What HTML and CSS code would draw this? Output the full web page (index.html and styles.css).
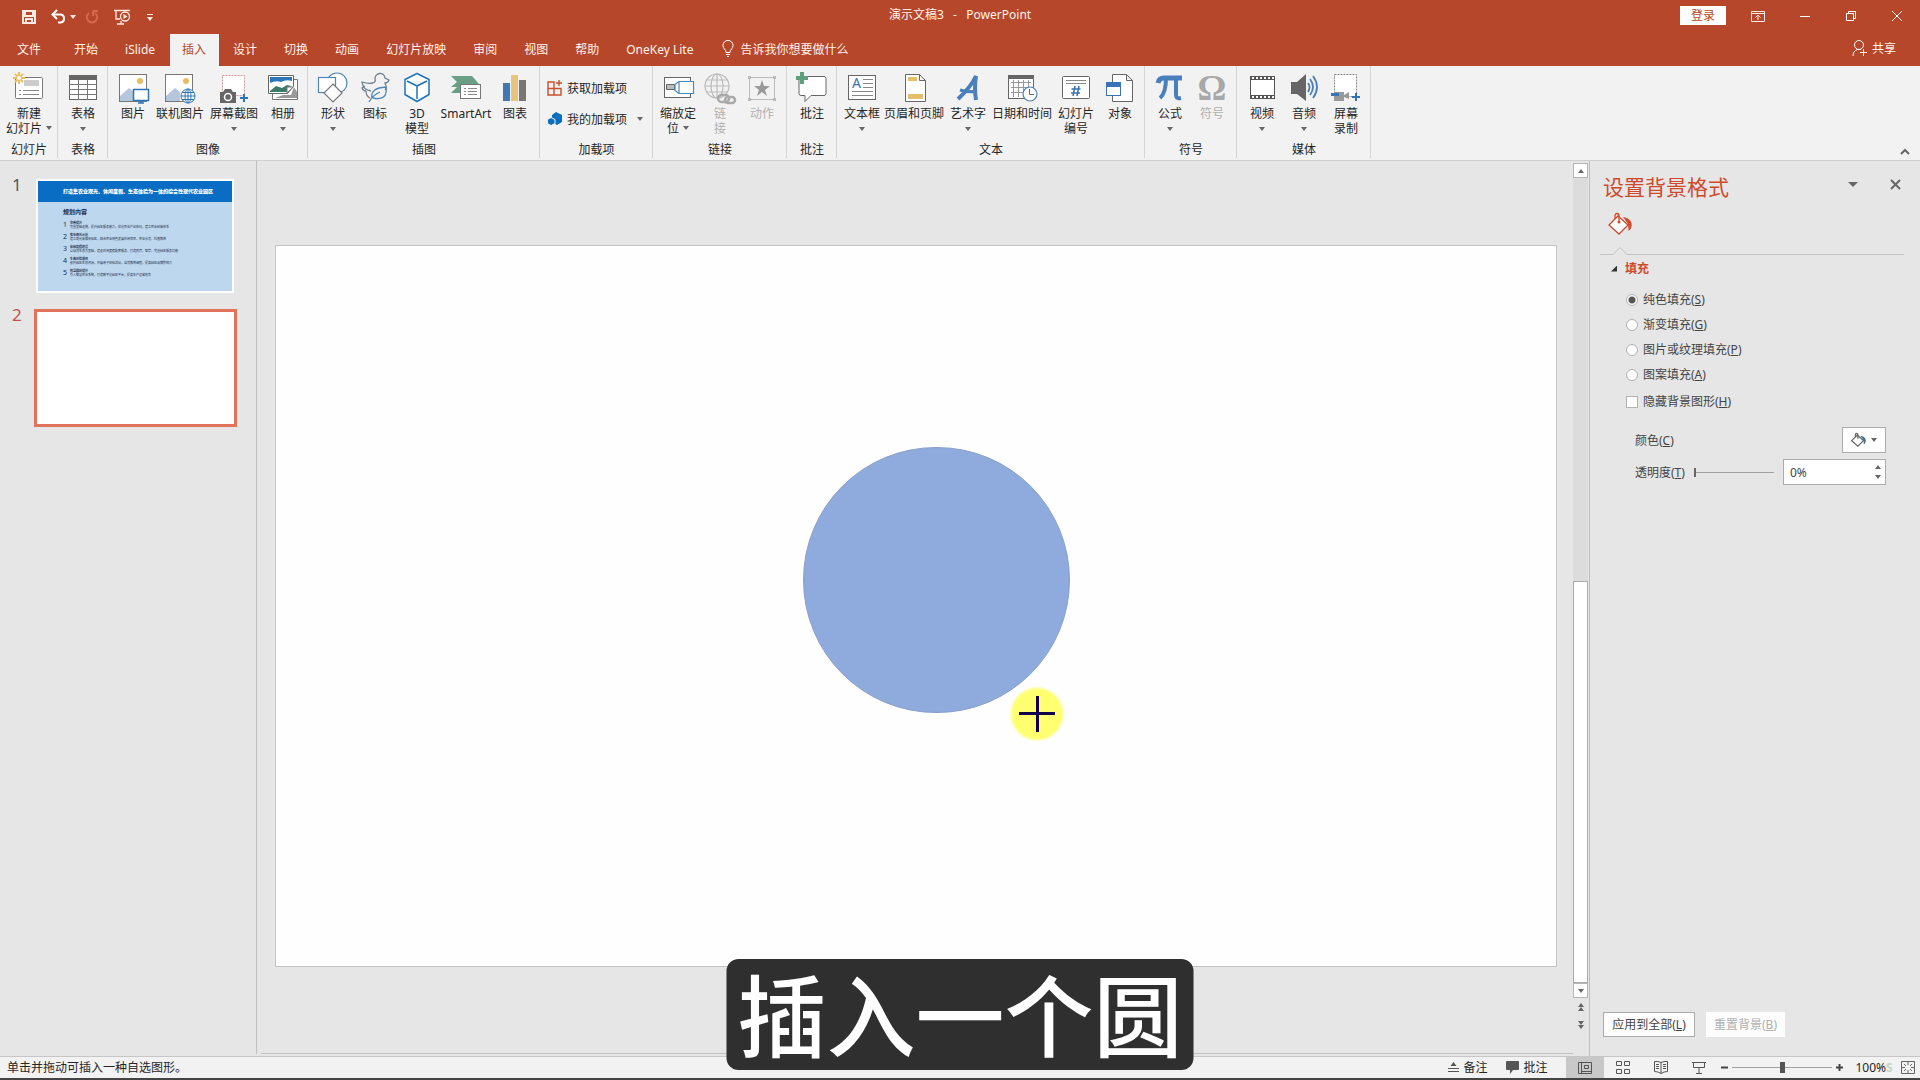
FILE: index.html
```html
<!DOCTYPE html>
<html lang="zh-CN">
<head>
  <meta charset="UTF-8" />
  <meta name="viewport" content="width=device-width, initial-scale=1.0" />
  <title>演示文稿3 - PowerPoint</title>
  <link rel="stylesheet" href="styles.css">
</head>
<body>

<header class="titlebar">
  <div class="quick">
    <button type="button" aria-label="保存"><svg width="14" height="14" viewBox="0 0 14 14"><path fill="none" stroke="#ffe9e0" stroke-width="2" d="M1 1h12v12H1zM3 1v5h8V1M4 13V9h6v4"/></svg></button>
    <button type="button" class="undo" aria-label="撤消"><svg width="15" height="14" viewBox="0 0 15 14"><path fill="none" stroke="#fff" stroke-width="2" d="M2 4.500h7q4 0 4 4t-4 4H7"/><path fill="none" stroke="#fff" stroke-width="2" d="M6 0L1.500 4.500 6 9"/></svg><span class="caret light"></span></button>
    <button type="button" class="redo" aria-label="恢复"><svg width="14" height="14" viewBox="0 0 14 14"><path fill="none" stroke="#d4694f" stroke-width="2" d="M4 3a5.200 5.200 0 1 0 6 0M8 1v5M8 1h5"/></svg></button>
    <button type="button" class="play" aria-label="从头开始"><svg width="17" height="16" viewBox="0 0 17 16"><path fill="none" stroke="#ffe9e0" stroke-width="1.300" d="M0 1.500h16M2 2v8h4M3 15h7M7 12v3"/><circle cx="11" cy="7.500" r="4.500" fill="#b7472a" stroke="#ffe9e0" stroke-width="1.300"/><path fill="#ffe9e0" d="M9.500 5v5l4-2.500z"/></svg></button>
    <button type="button" class="more" aria-label="自定义"><i></i><span class="caret light"></span></button>
  </div>
  <div class="doc-title">演示文稿3 &nbsp; - &nbsp; PowerPoint</div>
  <div class="window-tools">
    <button type="button" class="signin">登录</button>
    <button type="button" aria-label="功能区显示选项"><svg width="14" height="12" viewBox="0 0 14 12"><path fill="none" stroke="#ffe9e0" d="M.5 1.500h13v10H.5zM.5 3.500h13M7 10V5M4.500 7.500L7 5l2.500 2.500"/></svg></button>
    <button type="button" aria-label="最小化"><svg width="12" height="12" viewBox="0 0 12 12"><path stroke="#fff" d="M1 6.500h10"/></svg></button>
    <button type="button" aria-label="还原"><svg width="12" height="12" viewBox="0 0 12 12"><path fill="none" stroke="#fff" d="M1.500 3.500h7v7h-7zM3.500 3V1.500h7v7H9"/></svg></button>
    <button type="button" aria-label="关闭"><svg width="12" height="12" viewBox="0 0 12 12"><path stroke="#fff" d="M1 1l10 10M11 1L1 11"/></svg></button>
  </div>
</header>

<nav class="tabs">
  <button type="button" class="file">文件</button>
  <button type="button">开始</button>
  <button type="button">iSlide</button>
  <button type="button" class="active">插入</button>
  <button type="button">设计</button>
  <button type="button">切换</button>
  <button type="button">动画</button>
  <button type="button">幻灯片放映</button>
  <button type="button">审阅</button>
  <button type="button">视图</button>
  <button type="button">帮助</button>
  <button type="button">OneKey Lite</button>
  <button type="button" class="tell"><svg width="12" height="16" viewBox="0 0 12 16"><path fill="none" stroke="#fff" d="M4 11.500q0-2-1.500-3.500a5 5 0 1 1 7 0Q8 9.500 8 11.500zM4 13.500h4M5 15.500h2"/></svg>告诉我你想要做什么</button>
  <button type="button" class="share"><svg width="16" height="16" viewBox="0 0 16 16"><path fill="none" stroke="#fff" d="M1 16q0-5 4.500-6.500h3M11.500 9v7M8 12.500h7"/><circle cx="7" cy="5" r="4.500" fill="none" stroke="#fff"/></svg>共享</button>
</nav>

<section class="ribbon">
  <div class="group">
    <div class="tools">
      <button type="button" class="tool w50">
        <svg class="icon" viewBox="0 0 30 30"><rect x="1.500" y="5.500" width="27" height="21" rx="1" fill="#fff" stroke="#777"/><path fill="#ccc" d="M10 8h15v6H10z"/><path stroke="#888" d="M5 18.500h2M9 18.500h16M5 22.500h2M9 22.500h16"/><path stroke="#eebf5e" stroke-width="2" d="M5 0v12M-1 6h12M1 2l8 8M9 2l-8 8"/><circle cx="5" cy="6" r="2" fill="#fff"/></svg>
        <span>新建</span><span>幻灯片<i class="caret side"></i></span>
      </button>
    </div>
    <div class="caption">幻灯片</div>
  </div>

  <div class="group">
    <div class="tools">
      <button type="button" class="tool">
        <svg class="icon" viewBox="0 0 30 30"><rect x="1.500" y="3.500" width="27" height="24" fill="#fff" stroke="#666"/><path fill="#666" d="M1 3h28v5H1z"/><path stroke="#777" d="M1 12.500h28M1 17.500h28M1 22.500h28M10.500 8v20M19.500 8v20"/></svg>
        <span>表格</span><i class="caret"></i>
      </button>
    </div>
    <div class="caption">表格</div>
  </div>

  <div class="group">
    <div class="tools">
      <button type="button" class="tool">
        <svg class="icon" viewBox="0 0 30 30"><rect x="1.500" y="2.500" width="27" height="27" fill="#fff" stroke="#777"/><path fill="#b5c7dc" d="M2 29v-5l9-8 5 4v9z"/><circle cx="22" cy="9" r="3" fill="#e8bd62"/><rect x="15.500" y="17.500" width="15" height="11" fill="#fff" stroke="#2f75b5" stroke-width="1.500"/><path stroke="#2f75b5" stroke-width="1.500" d="M23 29v2M20 31h6"/></svg>
        <span>图片</span>
      </button>
      <button type="button" class="tool w52">
        <svg class="icon" viewBox="0 0 30 30"><rect x=".5" y="2.500" width="27" height="27" fill="#fff" stroke="#777"/><path fill="#b5c7dc" d="M1 29v-5l9-8 5 4v9z"/><circle cx="21" cy="9" r="3" fill="#e8bd62"/><g fill="#fff" stroke="#2f75b5"><circle cx="23" cy="24" r="7"/><ellipse cx="23" cy="24" rx="3" ry="7"/><path d="M16 24h14M17 20.500h12M17 27.500h12M23 17v14"/></g></svg>
        <span>联机图片</span>
      </button>
      <button type="button" class="tool w56">
        <svg class="icon" viewBox="0 0 30 30"><rect x="3.500" y="3.500" width="22" height="20" fill="#fff" stroke="#c99" stroke-dasharray="2 1"/><path fill="#666" d="M1 20h3l2-3h6l2 3h3v11H1z"/><circle cx="9" cy="25" r="3.500" fill="#666" stroke="#fff" stroke-width="1.500"/><path stroke="#2f75b5" stroke-width="2" d="M25 22v8M21 26h8"/></svg>
        <span>屏幕截图</span><i class="caret"></i>
      </button>
      <button type="button" class="tool">
        <svg class="icon" viewBox="0 0 30 30"><path fill="#fff" stroke="#777" d="M4.500 7.500h25v20h-25z"/><path fill="#999" d="M7 26l8-3h8l3-8 3 5v6z"/><path fill="#fff" stroke="#666" d="M.5 3.500h25v11l-6 7H.5z"/><path fill="#2f75b5" d="M2 5h22v4q-6-2-11 1-5-2-11 1z"/><path fill="#3c7a68" d="M2 19l6-5 6 2 5-3 4 1-4 6H2z"/><path fill="#fff" stroke="#777" d="M19 21v-6h6z"/></svg>
        <span>相册</span><i class="caret"></i>
      </button>
    </div>
    <div class="caption">图像</div>
  </div>

  <div class="group">
    <div class="tools">
      <button type="button" class="tool">
        <svg class="icon" viewBox="0 0 30 30"><g fill="#fff" stroke="#5085b8" stroke-width="1.200"><circle cx="19" cy="11" r="10"/><rect x=".5" y="5.500" width="17" height="15"/><path stroke="#777" d="M15 12l9 9-9 9-9-9z"/></g></svg>
        <span>形状</span><i class="caret"></i>
      </button>
      <button type="button" class="tool">
        <svg class="icon" viewBox="0 0 30 30"><g fill="none" stroke="#6f7f8e" stroke-width="1.300"><path d="M11 19q-8-1-9-9 6 2 11 1 3-1 2-4a5 5 0 0 1 10-1l4 2q-1 3-4 3l1 3q1 2-1 4M5 14l-3 2q1 3 4 3M6 19q0 5 4 7"/><path stroke="#5085b8" d="M9 30q4-7 11-10M12 26q-2-10 14-11 2 14-13 11"/></g></svg>
        <span>图标</span>
      </button>
      <button type="button" class="tool">
        <svg class="icon" viewBox="0 0 30 30"><path fill="#fff" stroke="#1e74b8" stroke-width="1.500" stroke-linejoin="round" d="M15 1.500l12 6v15l-12 7-12-7v-15zM5 9l10 5 10-5M15 14v13"/></svg>
        <span>3D</span><span>模型</span>
      </button>
      <button type="button" class="tool w56">
        <svg class="icon" viewBox="0 0 30 30"><path fill="#67a085" d="M0 4h21l7 8-5 3H0l6-5z"/><path fill="#67a085" d="M0 21l6-6h5v6z"/><rect x="9.500" y="12.500" width="20" height="14" fill="#fff" stroke="#777"/><path stroke="#888" d="M13 16.500h2M17 16.500h9M13 19.500h2M17 19.500h9M13 22.500h2M17 22.500h9"/></svg>
        <span>SmartArt</span>
      </button>
      <button type="button" class="tool">
        <svg class="icon" viewBox="0 0 30 30"><path fill="#3f78b4" d="M3 11h7v18H3z"/><path fill="#e8c57c" d="M11 3h7v26h-7z"/><path fill="#777" d="M19 8h7v21h-7z"/></svg>
        <span>图表</span>
      </button>
    </div>
    <div class="caption">插图</div>
  </div>

  <div class="group addins">
    <div class="rows">
      <button type="button"><svg width="16" height="16" viewBox="0 0 16 16"><path fill="none" stroke="#c8502d" stroke-width="1.400" d="M1 2h6v13H1zM1 8.500h13V15H7V2M12 0v6M9 3h6"/></svg>获取加载项</button>
      <button type="button"><svg width="16" height="16" viewBox="0 0 16 16"><path fill="#0b6fc0" d="M9 1l6 3v7l-5 3-5-3V4z"/><path fill="#0b6fc0" stroke="#f3f2f2" d="M4 6.500l4 2v4l-4 2-3.500-2v-4z"/></svg>我的加载项<i class="caret"></i></button>
    </div>
    <div class="caption">加载项</div>
  </div>

  <div class="group">
    <div class="tools">
      <button type="button" class="tool">
        <svg class="icon" viewBox="0 0 30 30"><rect x="1.500" y="5.500" width="26" height="20" fill="#fff" stroke="#666"/><path fill="#bbb" stroke="#666" d="M3.500 12.500h8v5h-8z"/><path fill="#fff" stroke="#4d88bd" stroke-width="1.200" d="M12 12.500l4-3h14.500v12H16l-4-3zM16 9.500v12"/></svg>
        <span>缩放定</span><span>位<i class="caret side"></i></span>
      </button>
      <button type="button" class="tool" disabled>
        <svg class="icon" viewBox="0 0 30 30"><g fill="none" stroke="#bbb" stroke-width="1.200"><circle cx="12" cy="14" r="12"/><ellipse cx="12" cy="14" rx="6" ry="12"/><path d="M0 14h24M12 2v24M2 8h20M2 20h20"/></g><g fill="none" stroke="#aaa" stroke-width="2.500"><rect x="13" y="23" width="11" height="7" rx="3.500"/><rect x="20" y="25" width="10" height="6" rx="3"/></g></svg>
        <span>链</span><span>接</span>
      </button>
      <button type="button" class="tool" disabled>
        <svg class="icon" viewBox="0 0 30 30"><rect x="2.500" y="5.500" width="25" height="22" fill="none" stroke="#bbb"/><path fill="#bbb" d="M1 4h3v3H1zM26 4h3v3h-3zM1 26h3v3H1zM26 26h3v3h-3z"/><path fill="#999" d="M15 8l2 6h6l-5 4 2 6-5-4-5 4 2-6-5-4h6z"/></svg>
        <span>动作</span>
      </button>
    </div>
    <div class="caption">链接</div>
  </div>

  <div class="group">
    <div class="tools">
      <button type="button" class="tool">
        <svg class="icon" viewBox="0 0 30 30"><path fill="#fff" stroke="#666" d="M4 4.500h23q2 0 2 2v15q0 2-2 2H14l-6 6v-6H4q-2 0-2-2v-15q0-2 2-2z"/><path stroke="#5f9f80" stroke-width="4" d="M5 0v12M-1 6h12"/></svg>
        <span>批注</span>
      </button>
    </div>
    <div class="caption">批注</div>
  </div>

  <div class="group">
    <div class="tools">
      <button type="button" class="tool">
        <svg class="icon" viewBox="0 0 30 30"><rect x="1.500" y="3.500" width="27" height="24" fill="#fff" stroke="#666"/><text class="glyph-a" x="5" y="16">A</text><path stroke="#888" d="M16 7.500h10M16 11.500h10M16 15.500h10M5 19.500h21M5 23.500h21"/></svg>
        <span>文本框</span><i class="caret"></i>
      </button>
      <button type="button" class="tool w62">
        <svg class="icon" viewBox="0 0 30 30"><path fill="#fff" stroke="#666" d="M6.500 2.500h14l6 6v21h-20zM20.500 2.500v6h6"/><path fill="#e6bf6c" d="M9 5h9v4H9zM9 22h15v5H9z"/></svg>
        <span>页眉和页脚</span>
      </button>
      <button type="button" class="tool w46">
        <svg class="icon" viewBox="0 0 30 30"><path fill="none" stroke="#4a7fbd" stroke-width="4" d="M5 27Q18 15 23 4q-2 12 0 24"/><path stroke="#4a7fbd" stroke-width="3" d="M7 18q10 3 16 1"/></svg>
        <span>艺术字</span><i class="caret"></i>
      </button>
      <button type="button" class="tool w62">
        <svg class="icon" viewBox="0 0 30 30"><rect x="1.500" y="3.500" width="25" height="23" fill="#fff" stroke="#666"/><path fill="#666" d="M1 3h26v4H1z"/><path stroke="#999" d="M4 10.500h20M4 15.500h20M4 20.500h20M6.500 8v17M11.500 8v17M16.500 8v17M21.500 8v17"/><circle cx="23" cy="22" r="7" fill="#fff" stroke="#4d80af" stroke-width="1.200"/><path fill="none" stroke="#666" d="M22.500 17v5.500H27"/></svg>
        <span>日期和时间</span>
      </button>
      <button type="button" class="tool w46">
        <svg class="icon" viewBox="0 0 30 30"><rect x="1.500" y="4.500" width="27" height="22" rx="1" fill="#fff" stroke="#666"/><path stroke="#888" d="M5 8.500h20M5 11.500h20"/><path stroke="#3874b5" stroke-width="1.500" d="M14 14l-2 10M18 14l-2 10M10.500 17h9M10 21h9"/></svg>
        <span>幻灯片</span><span>编号</span>
      </button>
      <button type="button" class="tool">
        <svg class="icon" viewBox="0 0 30 30"><path fill="#fff" stroke="#666" d="M7.500 2.500h14l6 6v21h-20zM21.500 2.500v6h6"/><rect x="1.500" y="10.500" width="14" height="13" fill="#fff" stroke="#3874b5"/><path fill="#3874b5" d="M1 10h15v5H1z"/></svg>
        <span>对象</span>
      </button>
    </div>
    <div class="caption">文本</div>
  </div>

  <div class="group">
    <div class="tools">
      <button type="button" class="tool">
        <svg class="icon" viewBox="0 0 30 30"><path fill="none" stroke="#4a7fbd" stroke-width="5" d="M3 11q1-5 6-5h18"/><path fill="none" stroke="#4a7fbd" stroke-width="4" d="M11 6q0 15-6 20M21 6v17q0 4 5 3"/></svg>
        <span>公式</span><i class="caret"></i>
      </button>
      <button type="button" class="tool" disabled>
        <svg class="icon" viewBox="0 0 30 30"><text class="glyph-omega" x="15" y="28">Ω</text></svg>
        <span>符号</span>
      </button>
    </div>
    <div class="caption">符号</div>
  </div>

  <div class="group">
    <div class="tools">
      <button type="button" class="tool">
        <svg class="icon" viewBox="0 0 30 30"><rect x="3.500" y="4.500" width="24" height="22" fill="#fff" stroke="#555"/><path stroke="#555" stroke-width="4" d="M3 6h25M3 25h25"/><path stroke="#fff" stroke-width="2" stroke-dasharray="2 2" d="M5 6h22M5 25h22"/></svg>
        <span>视频</span><i class="caret"></i>
      </button>
      <button type="button" class="tool">
        <svg class="icon" viewBox="0 0 30 30"><path fill="#666" d="M2 10h6l9-8v27l-9-7H2z"/><path fill="none" stroke="#4a7fbd" stroke-width="1.800" d="M19 11q3 4 0 9M21 7q6 8 0 16M24 4q8 11 0 22"/></svg>
        <span>音频</span><i class="caret"></i>
      </button>
      <button type="button" class="tool">
        <svg class="icon" viewBox="0 0 30 30"><rect x="3.500" y="2.500" width="22" height="22" fill="#fff" stroke="#888" stroke-dasharray="2 1"/><path fill="#999" d="M3 20h10v9H3zM13 23l5-3v7l-5-2z"/><path fill="#3874b5" d="M0 21h8v3H0z"/><path stroke="#2f75b5" stroke-width="2" d="M25 21v8M21 25h8"/></svg>
        <span>屏幕</span><span>录制</span>
      </button>
    </div>
    <div class="caption">媒体</div>
  </div>

  <button type="button" class="collapse" aria-label="折叠功能区"><svg width="10" height="7" viewBox="0 0 10 7"><path fill="none" stroke="#666" stroke-width="2" d="M1 6l4-4 4 4"/></svg></button>
</section>

<main class="workspace">
  <aside class="slides">
    <ol>
      <li>
        <span class="num">1</span>
        <button type="button" class="thumb">
          <span class="thumb-head">打造集农业观光、休闲度假、生态体验为一体的综合性现代农业园区</span>
          <span class="thumb-body">
            <b class="thumb-title">规划内容</b>
            <span class="row"><em>1</em><span><b>完善提升</b><small>完善基础设施，提升园区服务能力，优化农业产业布局，建立农业经营体系</small></span></span>
            <span class="row"><em>2</em><span><b>农业观光示范</b><small>建立观光采摘体验区，结合农业特色发展休闲项目，农业示范，科普教育</small></span></span>
            <span class="row"><em>3</em><span><b>休闲度假建设</b><small>以自然生态为基础，建设休闲度假配套服务，打造民宿，餐饮，完善园区服务功能</small></span></span>
            <span class="row"><em>4</em><span><b>生态体验项目</b><small>依托园区生态资源，开展亲子体验活动，自然教育课程，提高园区品牌影响力</small></span></span>
            <span class="row"><em>5</em><span><b>智慧园区提升</b><small>引入智慧农业系统，打造数字化园区平台，提高生产运营效率</small></span></span>
          </span>
        </button>
      </li>
      <li class="current">
        <span class="num">2</span>
        <button type="button" class="thumb" aria-label="幻灯片 2"></button>
      </li>
    </ol>
  </aside>

  <section class="stage">
    <div class="slide">
      <div class="circle"></div>
      <div class="pointer"></div>
    </div>
  </section>

  <div class="scrollbar">
    <button type="button" class="arrow" aria-label="向上"><i class="up"></i></button>
    <div class="track"><div class="grip"></div></div>
    <button type="button" class="arrow" aria-label="向下"><i class="down"></i></button>
    <button type="button" class="jump" aria-label="上一张"><i class="up"></i><i class="up"></i></button>
    <button type="button" class="jump" aria-label="下一张"><i class="down"></i><i class="down"></i></button>
  </div>

  <aside class="format">
    <div class="format-head">
      <h1>设置背景格式</h1>
      <button type="button" aria-label="选项"><i class="down big"></i></button>
      <button type="button" aria-label="关闭窗格"><svg width="11" height="11" viewBox="0 0 11 11"><path stroke="#666" stroke-width="2" d="M1 1l9 9M10 1l-9 9"/></svg></button>
    </div>
    <button type="button" class="bucket" aria-label="填充"><svg width="24" height="22" viewBox="0 0 24 22"><path fill="#fff" stroke="#cf4a2c" stroke-width="1.300" d="M10 3l10 9-9 9-10-9z"/><path fill="none" stroke="#cf4a2c" stroke-width="1.300" d="M7 6V3q0-2.500 2-2.500t2 2.500v6"/><circle cx="11" cy="9" r="1.500" fill="#cf4a2c"/><path fill="#cf4a2c" d="M15 4q7 1 8.500 6 1 5-3 8 0-6-1-8z"/></svg></button>
    <svg class="rule" height="8" viewBox="0 0 304 8" preserveAspectRatio="xMinYMin slice"><path fill="none" stroke="#c2c2c2" d="M0 7.500h13l7-7 7 7h277"/></svg>

    <h2><i class="fold"></i>填充</h2>
    <div class="choices">
      <label><input type="radio" name="fill" checked>纯色填充(<u>S</u>)</label>
      <label><input type="radio" name="fill">渐变填充(<u>G</u>)</label>
      <label><input type="radio" name="fill">图片或纹理填充(<u>P</u>)</label>
      <label><input type="radio" name="fill">图案填充(<u>A</u>)</label>
      <label><input type="checkbox">隐藏背景图形(<u>H</u>)</label>
    </div>
    <div class="field">
      <span>颜色(<u>C</u>)</span>
      <button type="button" class="color" aria-label="颜色"><svg width="15" height="14" viewBox="0 0 24 22"><path fill="#fff" stroke="#666" stroke-width="2" d="M10 3l10 9-9 9-10-9zM7 6V3q0-2.500 2-2.500t2 2.500v6"/><path fill="#3f6f96" d="M15 4q7 1 8.500 6 1 5-3 8 0-6-1-8z"/></svg><i class="down"></i></button>
    </div>
    <div class="field">
      <label for="alpha">透明度(<u>T</u>)</label>
      <input type="range" class="alpha" id="alpha" min="0" max="100" value="0">
      <div class="spin">
        <input type="text" value="0%" aria-label="透明度值">
        <div class="spin-btns">
          <button type="button" aria-label="增加"><i class="up"></i></button>
          <button type="button" aria-label="减少"><i class="down"></i></button>
        </div>
      </div>
    </div>
    <div class="format-foot">
      <button type="button" class="apply">应用到全部(<u>L</u>)</button>
      <button type="button" class="reset" disabled>重置背景(<u>B</u>)</button>
    </div>
  </aside>
</main>

<footer class="status">
  <span class="hint">单击并拖动可插入一种自选图形。</span>
  <button type="button" class="notes"><svg width="11" height="12" viewBox="0 0 11 12"><path stroke="#555" d="M0 6.500h11M0 9.500h11"/><path fill="#555" d="M5.500 0l3 4h-6z"/></svg>备注</button>
  <button type="button" class="comments"><svg width="13" height="13" viewBox="0 0 13 13"><path fill="#555" d="M1 0h11q1 0 1 1v7q0 1-1 1H7l-3 4V9H1Q0 9 0 8V1q0-1 1-1z"/></svg>批注</button>
  <button type="button" class="view on" aria-label="普通视图"><svg width="14" height="12" viewBox="0 0 14 12"><path fill="none" stroke="#555" d="M.5.5h13v11H.5zM3.500.5v11M3.500 9.500h10M6.500 3.500h4v3h-4z"/></svg></button>
  <button type="button" class="view" aria-label="幻灯片浏览"><svg width="14" height="13" viewBox="0 0 14 13"><path fill="none" stroke="#555" d="M.5.500h5v4h-5zM8.500.500h5v4h-5zM.5 8.500h5v4h-5zM8.500 8.500h5v4h-5z"/></svg></button>
  <button type="button" class="view" aria-label="阅读视图"><svg width="14" height="13" viewBox="0 0 14 13"><path fill="none" stroke="#555" d="M7 1.500Q4 0 .5.500v10q3.500 0 6.500 2 3-2 6.500-2V.500Q10 0 7 1.500v11M2 3.500h3M2 5.500h3M2 7.500h3M9 3.500h3M9 5.500h3M9 7.500h3"/></svg></button>
  <button type="button" class="view" aria-label="幻灯片放映"><svg width="14" height="13" viewBox="0 0 14 13"><path fill="none" stroke="#555" d="M0 1.500h14M1.500 1.500v5h11v-5M7 7v5M4 12.500h6"/></svg></button>
  <button type="button" class="step" aria-label="缩小"><svg width="7" height="7" viewBox="0 0 7 7"><path stroke="#444" stroke-width="2" d="M0 3.500h7"/></svg></button>
  <input type="range" class="zoom" min="0" max="100" value="50" aria-label="缩放">
  <button type="button" class="step" aria-label="放大"><svg width="7" height="7" viewBox="0 0 7 7"><path stroke="#444" stroke-width="2" d="M0 3.500h7M3.500 0v7"/></svg></button>
  <span class="percent">100%</span>
  <span class="mark">S</span>
  <button type="button" class="fit" aria-label="适应窗口"><svg width="14" height="13" viewBox="0 0 14 13"><path fill="none" stroke="#666" d="M.5.500h13v12H.5zM7 1v3M7 9v3M1 6.500h3M10 6.500h3M3 3l2 2M11 3L9 5M3 10l2-2M11 10L9 8"/></svg></button>
</footer>

<div class="subtitle">插入一个圆</div>

</body>
</html>
```
FILE: styles.css
```css
* {
  box-sizing: border-box;
}
body {
  margin: 0;
  height: 100vh;
  display: flex;
  flex-direction: column;
  overflow: hidden;
  background: #e6e6e6;
  color: #262626;
  font: 12px/15px "Noto Sans", "Noto Sans CJK SC", sans-serif;
}
button {
  display: flex;
  align-items: center;
  margin: 0;
  padding: 0;
  border: 0;
  background: none;
  color: inherit;
  font: inherit;
  white-space: nowrap;
}
svg {
  display: block;
  flex: none;
  overflow: visible;
}

/* small triangles */
.caret, .up, .down {
  display: block;
  border: 3px solid transparent;
  border-top: 4px solid #666;
  border-bottom: 0;
}
.up {
  border-top: 0;
  border-bottom: 4px solid #666;
}
.caret.light {
  border-top-color: #ffe9e0;
}
.caret.side {
  display: inline-block;
  margin-left: 4px;
  vertical-align: 3px;
}
.down.big {
  border-width: 5px 5px 0;
}

/* title bar */
.titlebar {
  display: grid;
  grid-template-columns: 1fr auto 1fr;
  height: 34px;
  background: #b7472a;
  color: #fff2ec;
}
.quick {
  display: flex;
  align-items: center;
  padding-left: 22px;
}
.undo {
  margin-left: 15px;
  gap: 4px;
}
.redo {
  margin-left: 9px;
}
.play {
  margin-left: 15px;
}
.more {
  flex-direction: column;
  gap: 2px;
  margin-left: 16px;
}
.more i {
  width: 6px;
  height: 1px;
  background: #ffe9e0;
}
.doc-title {
  padding-top: 7px;
}
.window-tools {
  display: flex;
  align-items: center;
  justify-content: flex-end;
  gap: 34px;
  padding: 0 17px 3px 0;
}
.signin {
  height: 19px;
  padding: 0 11px;
  margin-right: -9px;
  background: #fff;
  color: #b7472a;
}

/* tabs */
.tabs {
  display: flex;
  gap: 2px;
  height: 32px;
  padding: 0 24px 0 5px;
  background: #b7472a;
  color: #fff2ec;
}
.tabs button {
  padding: 0 13px 2px 12px;
}
.tabs .file {
  margin-right: 6px;
}
.tabs .active {
  background: #f3f2f2;
  color: #b7472a;
}
.tabs .tell {
  gap: 6px;
  margin-left: 2px;
}
.tabs .share {
  gap: 4px;
  margin-left: auto;
  padding: 0 0 4px;
}

/* ribbon */
.ribbon {
  display: flex;
  height: 95px;
  background: #f3f2f2;
  border-bottom: 1px solid #cfcfcf;
}
.group {
  display: flex;
  flex-direction: column;
  justify-content: space-between;
  margin-bottom: 2px;
  padding: 6px 3px 1px 4px;
  border-right: 1px solid #d4d4d4;
}
.tools {
  display: flex;
}
.tool {
  flex-direction: column;
  justify-content: flex-start;
  width: 42px;
}
.tool.w46 { width: 46px; }
.tool.w50 { width: 50px; }
.tool.w52 { width: 52px; }
.tool.w56 { width: 56px; }
.tool.w62 { width: 62px; }
.tool .icon {
  width: 30px;
  height: 30px;
  margin-bottom: 4px;
}
.tool > .caret {
  margin-top: 6px;
}
.tool:disabled {
  color: #b0b0b0;
}
.glyph-a {
  fill: #3b73b5;
  font: 14px "Noto Sans", sans-serif;
}
.glyph-omega {
  fill: #a8a8a8;
  font: bold 36px "Liberation Serif", serif;
  text-anchor: middle;
}
.caption {
  text-align: center;
}
.addins {
  width: 113px;
}
.rows {
  display: flex;
  flex-direction: column;
  gap: 15px;
  padding: 8px 0 0 3px;
}
.rows button {
  gap: 4px;
  height: 16px;
}
.rows .caret {
  margin-left: 6px;
}
.collapse {
  align-self: flex-end;
  margin: 0 10px 5px auto;
}

/* work area */
.workspace {
  flex: 1;
  display: flex;
  min-height: 0;
  border-bottom: 1px solid #c6c6c6;
}
.slides {
  width: 257px;
  border-right: 1px solid #c0c0c0;
  margin-bottom: 2px;
}
.slides ol {
  display: flex;
  flex-direction: column;
  gap: 16px;
  margin: 0;
  padding: 18px 19px 0 12px;
  list-style: none;
}
.slides li {
  display: flex;
  gap: 11px;
  padding-right: 3px;
}
.num {
  width: 13px;
  color: #555;
  font-size: 17px;
  line-height: 11px;
}
.thumb {
  display: block;
  flex: 1;
  height: 114px;
  border: 2px solid #fff;
  background: #bdd7ee;
  overflow: hidden;
  text-align: left;
}
.slides .current {
  gap: 9px;
  padding-right: 0;
}
.current .num {
  color: #c0504d;
}
.current .thumb {
  height: 118px;
  border: 3px solid #e2735a;
  background: #fff;
}
.thumb-head {
  display: flex;
  align-items: center;
  height: 21px;
  padding-left: 25px;
  background: #0a6dc4;
  color: #fff;
  font-size: 5px;
  font-weight: 900;
}
.thumb-body {
  display: flex;
  flex-direction: column;
  height: 89px;
  padding: 6px 0 0 25px;
  color: #1d2c44;
}
.thumb-title {
  margin-bottom: 5px;
  font-size: 6px;
  line-height: 8px;
}
.row {
  display: flex;
  gap: 3px;
  height: 12px;
}
.row em {
  font-size: 7px;
  font-style: normal;
  line-height: 8px;
}
.row b, .row small {
  display: block;
  font-size: 3px;
  line-height: 4px;
}
.stage {
  flex: 1;
  display: flex;
  align-items: center;
  justify-content: center;
  margin: 0 0 2px 4px;
  padding: 0 16px 2px 14px;
  border-bottom: 1px solid #c0c0c0;
}
.slide {
  position: relative;
  width: 100%;
  aspect-ratio: 16 / 9;
  border: 1px solid #c3c3c3;
  background: #fefefe;
}
.circle {
  position: absolute;
  left: 41.2%;
  top: 27.9%;
  width: 20.8%;
  aspect-ratio: 1;
  border: 1px solid #8a9fc9;
  border-radius: 50%;
  background: #8faadc;
}
.pointer {
  position: absolute;
  left: 57.3%;
  top: 61.1%;
  width: 56px;
  height: 56px;
  border-radius: 50%;
  background:
    linear-gradient(#10004c, #10004c) center / 36px 3px no-repeat,
    linear-gradient(#10004c, #10004c) center / 3px 36px no-repeat,
    radial-gradient(closest-side, #ffff70 0 24px, #ffff7000 28px);
}

.scrollbar {
  display: flex;
  flex-direction: column;
  width: 16px;
  padding: 2px 1px 22px 0;
}
.arrow {
  justify-content: center;
  height: 15px;
  border: 1px solid #b5b5b5;
  background: #fff;
}
.track {
  flex: 1;
  display: flex;
  flex-direction: column;
  justify-content: flex-end;
  background: #dcdcdd;
}
.grip {
  height: 50%;
  border: 1px solid #ababab;
  background: #fff;
}
.jump {
  flex-direction: column;
  justify-content: center;
  height: 18px;
}

/* format pane */
.format {
  display: flex;
  flex-direction: column;
  width: 331px;
  padding: 12px 16px 19px 10px;
  border-left: 1px solid #bdbdbd;
  color: #444;
}
.format-head {
  display: flex;
  align-items: flex-start;
  gap: 32px;
  padding-right: 3px;
}
.format-head h1 {
  flex: 1;
  margin: 0 0 0 3px;
  color: #cf4a2c;
  font-size: 21px;
  font-weight: 400;
  line-height: 28px;
}
.format-head button {
  height: 22px;
}
.bucket {
  margin: 12px 0 0 8px;
}
.rule {
  width: 100%;
  margin-top: 12px;
}
.format h2 {
  display: flex;
  align-items: center;
  gap: 8px;
  margin: 5px 0 0 11px;
  color: #cf4a2c;
  font-size: 12px;
  line-height: 17px;
}
.fold {
  width: 6px;
  height: 6px;
  background: #333;
  clip-path: polygon(100% 0, 100% 100%, 0 100%);
}
.choices {
  display: flex;
  flex-direction: column;
  gap: 8px;
  margin: 14px 0 17px 26px;
}
.choices label {
  display: flex;
  align-items: center;
  line-height: 17px;
}
.choices label:last-child {
  margin-top: 2px;
}
.choices input {
  appearance: none;
  width: 12px;
  height: 12px;
  margin: 0 5px 0 0;
  border: 1px solid #b0b0b0;
  border-radius: 50%;
  background: #fff;
}
.choices input[type="checkbox"] {
  border-radius: 0;
}
.choices input:checked {
  background: radial-gradient(#555 0 3px, #fff 4px);
}
.field {
  display: flex;
  align-items: center;
  justify-content: space-between;
  height: 26px;
  margin: 0 18px 6px 35px;
}
.color {
  justify-content: center;
  gap: 5px;
  width: 44px;
  height: 26px;
  border: 1px solid #ababab;
  background: #fff;
}
input[type="range"] {
  appearance: none;
  height: 12px;
  margin: 0;
  background: linear-gradient(#a0a0a0, #a0a0a0) center / 100% 1px no-repeat;
}
.alpha {
  width: 80px;
}
.alpha::-webkit-slider-thumb {
  appearance: none;
  width: 2px;
  height: 9px;
  background: #666;
}
.spin {
  display: flex;
  width: 103px;
  height: 26px;
  border: 1px solid #ababab;
  background: #fff;
}
.spin input {
  flex: 1;
  min-width: 0;
  padding: 0 6px;
  border: 0;
  background: none;
  color: #444;
  font: inherit;
}
.spin-btns {
  display: flex;
  flex-direction: column;
  justify-content: space-evenly;
  padding-right: 4px;
}
.format-foot {
  display: flex;
  gap: 11px;
  margin: auto 0 0 3px;
}
.apply, .reset {
  justify-content: center;
  height: 25px;
  background: #fdfdfd;
}
.apply {
  width: 92px;
  border: 1px solid #ababab;
}
.reset {
  width: 79px;
  color: #b0b0b0;
}

/* status bar */
.status {
  display: flex;
  align-items: center;
  height: 23px;
  padding: 0 5px 0 7px;
  border-bottom: 2px solid #444;
  background: #f3f2f2;
}
.hint {
  flex: 1;
}
.notes, .comments {
  gap: 4px;
  margin-right: 19px;
}
.view {
  justify-content: center;
  width: 38px;
  height: 21px;
}
.view.on {
  background: #c8c8c8;
}
.step {
  margin: 0 4px;
}
.view + .step {
  margin-left: 3px;
}
.zoom {
  width: 100px;
}
.zoom::-webkit-slider-thumb {
  appearance: none;
  width: 5px;
  height: 11px;
  background: #555;
}
.percent {
  margin-left: 8px;
}
.mark {
  width: 15px;
  color: #c4d6c8;
  font-weight: 700;
}

/* caption over the screen */
.subtitle {
  position: absolute;
  left: 50%;
  bottom: 10px;
  transform: translateX(-50%);
  padding: 0 11px 6px;
  border-radius: 12px;
  background: #2f2f2f;
  color: #fff;
  font-family: "Noto Sans CJK SC", sans-serif;
  font-size: 89px;
  font-weight: 500;
  line-height: 105px;
  white-space: nowrap;
}
```
